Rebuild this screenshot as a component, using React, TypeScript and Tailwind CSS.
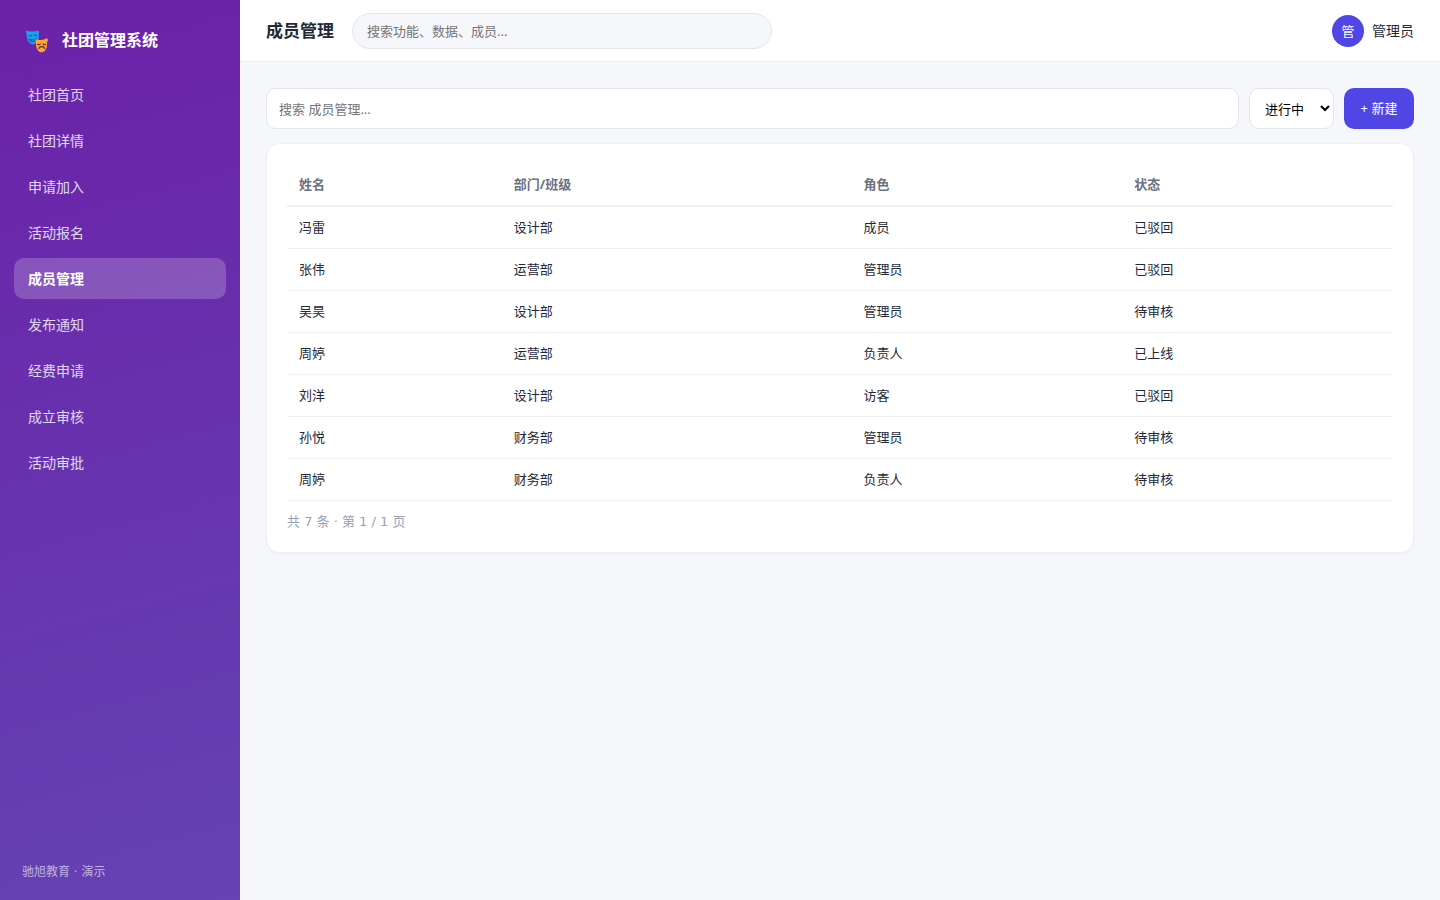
const navItems = [
  "社团首页",
  "社团详情",
  "申请加入",
  "活动报名",
  "成员管理",
  "发布通知",
  "经费申请",
  "成立审核",
  "活动审批",
]

const columns = ["姓名", "部门/班级", "角色", "状态"]

interface Member {
  name: string
  department: string
  role: string
  status: string
}

const members: Member[] = [
  { name: "冯雷", department: "设计部", role: "成员", status: "已驳回" },
  { name: "张伟", department: "运营部", role: "管理员", status: "已驳回" },
  { name: "吴昊", department: "设计部", role: "管理员", status: "待审核" },
  { name: "周婷", department: "运营部", role: "负责人", status: "已上线" },
  { name: "刘洋", department: "设计部", role: "访客", status: "已驳回" },
  { name: "孙悦", department: "财务部", role: "管理员", status: "待审核" },
  { name: "周婷", department: "财务部", role: "负责人", status: "待审核" },
]

function MasksLogo() {
  return (
    <svg width="30" height="30" viewBox="0 -1 30 30" aria-hidden="true">
      <path
        d="M4 5.5c0-.8.7-1.2 1.4-.8 1 .8 2 1 3 .9 2-.1 4.5-.2 6.100-.6.8-.6 2.500-.5 2.500.6l-.2 3.600c.3 3.800-.8 7.300-4 8.800-1.700.8-3.600.5-5-.9C5.600 15 5 12.500 4.800 9.500 4.700 8 4 6.800 4 5.500z"
        fill="#0fa7f0"
      />
      <path
        d="M7 10.300c.6-1 1.800-1.100 2.600-.3M12 9.800c.6-1 1.800-1.100 2.600-.3M7.300 13.300c2.300 1 4.900.8 7-.6-.4 3.400-5.500 4.400-7 .6z"
        fill="none"
        stroke="#3f4fb5"
        strokeWidth="1.2"
        strokeLinecap="round"
      />
      <path
        d="M13.600 13.800c.2-.8 1-.8 1.600-.4 2.700.9 5.500.8 8-.5.900-.7 2.500-.6 2.700.5.200 1.200-.7 2-.8 3.200 0 3.500-.3 6.400-2.400 8.300-1.800 1.800-4.500 1.800-6.300.1-2-2-2.400-4.700-2.400-7.700 0-1.300-.6-2.300-.4-3.500z"
        fill="#ffa726"
      />
      <path
        d="M15.700 18.400c.9.500 1.900.3 2.600-.5M21 17.900c.7.800 1.700 1 2.600.5M16.800 22.600c.8-2.800 4.800-2.800 5.800-.1"
        fill="none"
        stroke="#71304f"
        strokeWidth="1.3"
        strokeLinecap="round"
      />
    </svg>
  )
}

function Sidebar() {
  return (
    <aside className="flex w-60 shrink-0 flex-col bg-[linear-gradient(165deg,#6b21a8,#6443b3)] px-[14px] pt-[22px] pb-[18px]">
      <div className="mb-4 flex items-center gap-[10px] px-2 text-base font-bold text-white">
        <MasksLogo />
        <span className="leading-9">社团管理系统</span>
      </div>
      <nav className="flex flex-col gap-[5px]">
        {navItems.map((item) => (
          <a
            key={item}
            href="#"
            className={
              item === "成员管理"
                ? "rounded-[10px] bg-white/20 px-[14px] text-sm leading-[41px] font-bold text-white"
                : "rounded-[10px] px-[14px] text-sm leading-[41px] text-white/80"
            }
          >
            {item}
          </a>
        ))}
      </nav>
      <p className="mt-auto px-2 font-['DejaVu_Sans','Noto_Sans_CJK_SC',sans-serif] text-xs leading-5 text-white/60">
        驰旭教育 · 演示
      </p>
    </aside>
  )
}

function Header() {
  return (
    <header className="flex items-center gap-[18px] border-b border-[#ebedf3] bg-white px-[26px] pt-[13px] pb-3">
      <h1 className="text-[17px] font-bold">成员管理</h1>
      <input
        type="search"
        aria-label="全局搜索"
        placeholder="搜索功能、数据、成员..."
        className="h-9 w-[420px] rounded-full border border-[#e3e6ef] bg-[#f5f7fb] px-[14px] text-[13px] placeholder:text-[#757575]"
      />
      <div className="ml-auto flex items-center gap-2 text-sm">
        <span className="flex size-8 items-center justify-center rounded-full bg-[#4f46e5] text-[13px] text-white">
          管
        </span>
        <span>管理员</span>
      </div>
    </header>
  )
}

function Toolbar() {
  return (
    <div className="mb-[14px] flex gap-[10px] text-[13px]">
      <input
        type="search"
        aria-label="搜索成员"
        placeholder="搜索 成员管理..."
        className="h-[41px] min-w-0 flex-1 rounded-[10px] border border-[#e3e6ef] bg-white px-3 placeholder:text-[#757575]"
      />
      <select
        aria-label="状态"
        className="h-[41px] w-[85px] rounded-[10px] border border-[#e3e6ef] bg-white pl-[11px] text-black"
      >
        <option>进行中</option>
        <option>已结束</option>
      </select>
      <button type="button" className="h-[41px] w-[70px] rounded-[10px] bg-[#4f46e5] text-white">
        + 新建
      </button>
    </div>
  )
}

function MemberTable() {
  return (
    <section className="rounded-[14px] border border-[#eff1f6] bg-white p-5 text-[13px] leading-[21px] shadow-[0_1px_3px_rgba(15,23,42,0.04)]">
      <table className="w-full">
        <thead>
          <tr className="border-b-2 border-[#eef0f5] text-left text-[#6b7280]">
            {columns.map((column) => (
              <th key={column} className="px-3 py-[10px] font-bold">
                {column}
              </th>
            ))}
          </tr>
        </thead>
        <tbody>
          {members.map((member, index) => (
            <tr key={index} className="border-b border-[#eef0f5]">
              <td className="px-3 py-[10px]">{member.name}</td>
              <td className="px-3 py-[10px]">{member.department}</td>
              <td className="px-3 py-[10px]">{member.role}</td>
              <td className="px-3 py-[10px]">{member.status}</td>
            </tr>
          ))}
        </tbody>
      </table>
      <p className="mt-[10px] font-['DejaVu_Sans','Noto_Sans_CJK_SC',sans-serif] text-[#94a3b8]">
        共 {members.length} 条 · 第 1 / 1 页
      </p>
    </section>
  )
}

export default function App() {
  return (
    <div className="flex min-h-screen bg-[#f5f7fb] font-['Noto_Sans','Noto_Sans_CJK_SC',sans-serif] text-[#1f2937]">
      <Sidebar />
      <div className="flex min-w-0 flex-1 flex-col">
        <Header />
        <main className="p-[26px]">
          <Toolbar />
          <MemberTable />
        </main>
      </div>
    </div>
  )
}
